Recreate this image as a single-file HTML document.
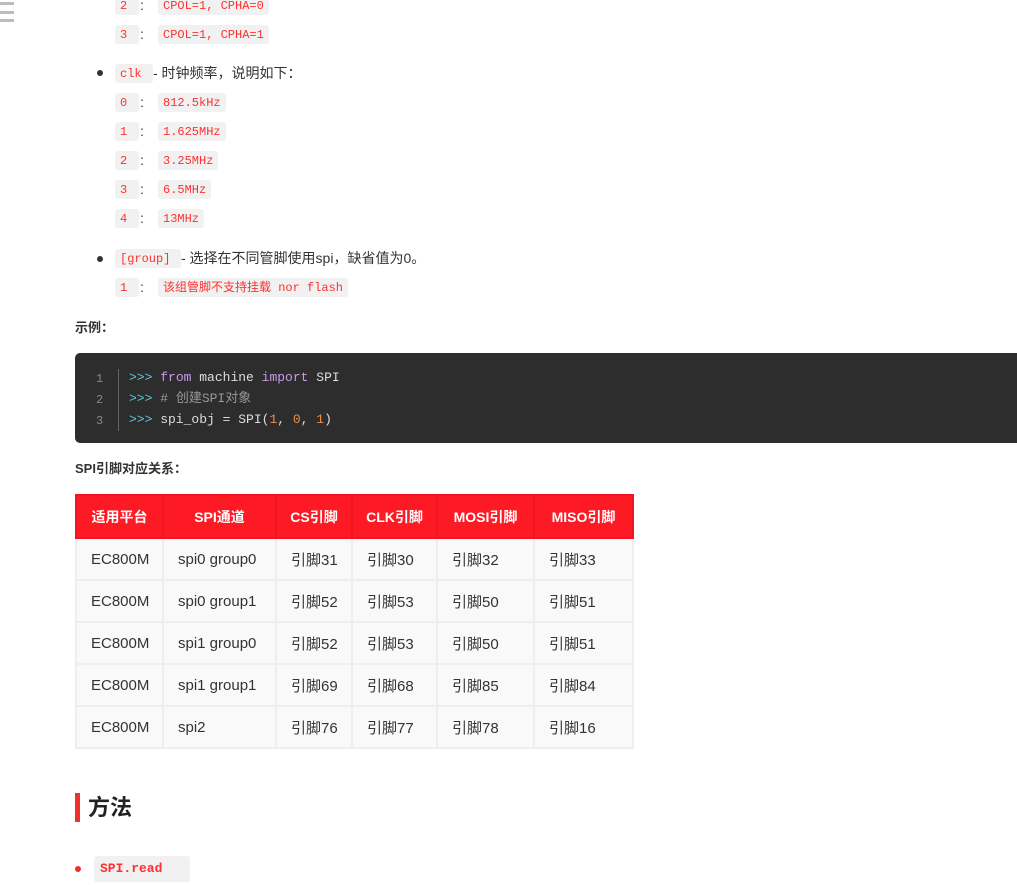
<!DOCTYPE html>
<html><head><meta charset="utf-8"><style>
body{margin:0;width:1017px;height:885px;overflow:hidden;background:#fff;position:relative;font-family:"Liberation Sans","Noto Sans CJK SC",sans-serif;color:#333;font-size:14px}
.a{position:absolute;white-space:nowrap;line-height:19px}
.c{position:absolute;background:#f1f1f1;border-radius:3px;color:#ff3030;font-family:"Liberation Mono","Noto Sans CJK SC",monospace;font-size:12px;height:19px;line-height:20px;padding:0 5px;box-sizing:border-box;white-space:nowrap}
.dot{position:absolute;width:6px;height:6px;border-radius:50%;background:#333}
table{position:absolute;left:75px;top:494px;border-collapse:collapse;font-size:15px;table-layout:fixed;width:557px}
td,th{border:2px solid #eee;height:42px;padding:0 0 0 14px;text-align:left;background:#f9f9f9;color:#333;font-weight:normal;white-space:nowrap;box-sizing:border-box}
th{background:#fe1a24;color:#fff;font-weight:bold;font-size:14px;text-align:center;border-color:#f01520;height:43px;padding:0}
</style></head><body>
<div class="a" style="left:0;top:2px;width:14px;height:3px;background:#bbb"></div>
<div class="a" style="left:0;top:11px;width:14px;height:3px;background:#bbb"></div>
<div class="a" style="left:0;top:19px;width:14px;height:3px;background:#bbb"></div>

<div class="c" style="left:115px;top:-4px;width:24px">2</div><div class="a" style="left:140px;top:-4px">:</div><div class="c" style="left:158px;top:-4px">CPOL=1, CPHA=0</div>
<div class="c" style="left:115px;top:25px;width:24px">3</div><div class="a" style="left:140px;top:25px">:</div><div class="c" style="left:158px;top:25px">CPOL=1, CPHA=1</div>

<div class="dot" style="left:97px;top:70px"></div>
<div class="c" style="left:115px;top:64px;width:38px">clk</div><div class="a" style="left:153px;top:64px">- 时钟频率，说明如下：</div>
<div class="c" style="left:115px;top:93px;width:24px">0</div><div class="a" style="left:140px;top:93px">:</div><div class="c" style="left:158px;top:93px">812.5kHz</div>
<div class="c" style="left:115px;top:122px;width:24px">1</div><div class="a" style="left:140px;top:122px">:</div><div class="c" style="left:158px;top:122px">1.625MHz</div>
<div class="c" style="left:115px;top:151px;width:24px">2</div><div class="a" style="left:140px;top:151px">:</div><div class="c" style="left:158px;top:151px">3.25MHz</div>
<div class="c" style="left:115px;top:180px;width:24px">3</div><div class="a" style="left:140px;top:180px">:</div><div class="c" style="left:158px;top:180px">6.5MHz</div>
<div class="c" style="left:115px;top:209px;width:24px">4</div><div class="a" style="left:140px;top:209px">:</div><div class="c" style="left:158px;top:209px">13MHz</div>

<div class="dot" style="left:97px;top:256px"></div>
<div class="c" style="left:115px;top:249px;width:66px">[group]</div><div class="a" style="left:181px;top:249px">- 选择在不同管脚使用spi，缺省值为0。</div>
<div class="c" style="left:115px;top:278px;width:24px">1</div><div class="a" style="left:140px;top:278px">:</div><div class="c" style="left:158px;top:278px;font-size:12px">该组管脚不支持挂载 nor flash</div>

<div class="a" style="left:75px;top:318px;font-weight:bold;font-size:13px">示例：</div>

<div class="a" style="left:75px;top:353px;width:950px;height:90px;background:#2d2d2d;border-radius:5px"></div>
<div class="a" style="left:118px;top:369px;width:1px;height:62px;background:#666"></div>
<div class="a" style="left:96px;top:369px;color:#888;font-family:'Liberation Mono',monospace;font-size:12px;line-height:21px">1<br>2<br>3</div>
<div class="a" style="left:129px;top:367px;color:#ddd;font-family:'Liberation Mono','Noto Sans CJK SC',monospace;font-size:13px;line-height:21px"><span style="color:#5fc8d8">&gt;&gt;&gt;</span> <span style="color:#c99ae6">from</span> machine <span style="color:#c99ae6">import</span> SPI<br><span style="color:#5fc8d8">&gt;&gt;&gt;</span> <span style="color:#999"># 创建SPI对象</span><br><span style="color:#5fc8d8">&gt;&gt;&gt;</span> spi_obj = SPI(<span style="color:#f08d49">1</span>, <span style="color:#f08d49">0</span>, <span style="color:#f08d49">1</span>)</div>

<div class="a" style="left:75px;top:459px;font-weight:bold;font-size:13px">SPI引脚对应关系：</div>

<table>
<colgroup><col style="width:87px"><col style="width:113px"><col style="width:76px"><col style="width:85px"><col style="width:97px"><col style="width:99px"></colgroup>
<tr><th>适用平台</th><th>SPI通道</th><th>CS引脚</th><th>CLK引脚</th><th>MOSI引脚</th><th>MISO引脚</th></tr>
<tr><td>EC800M</td><td>spi0 group0</td><td>引脚31</td><td>引脚30</td><td>引脚32</td><td>引脚33</td></tr>
<tr><td>EC800M</td><td>spi0 group1</td><td>引脚52</td><td>引脚53</td><td>引脚50</td><td>引脚51</td></tr>
<tr><td>EC800M</td><td>spi1 group0</td><td>引脚52</td><td>引脚53</td><td>引脚50</td><td>引脚51</td></tr>
<tr><td>EC800M</td><td>spi1 group1</td><td>引脚69</td><td>引脚68</td><td>引脚85</td><td>引脚84</td></tr>
<tr><td>EC800M</td><td>spi2</td><td>引脚76</td><td>引脚77</td><td>引脚78</td><td>引脚16</td></tr>
</table>

<div class="a" style="left:75px;top:793px;width:5px;height:29px;background:#f0302a"></div>
<div class="a" style="left:88px;top:793px;font-size:22px;font-weight:bold;line-height:29px;color:#222">方法</div>

<div class="a" style="left:75px;top:866px;width:6px;height:6px;border-radius:50%;background:#f03030"></div>
<div class="c" style="left:94px;top:856px;width:96px;height:26px;line-height:26px;font-size:13px;font-weight:bold;padding-left:6px">SPI.read</div>
</body></html>
